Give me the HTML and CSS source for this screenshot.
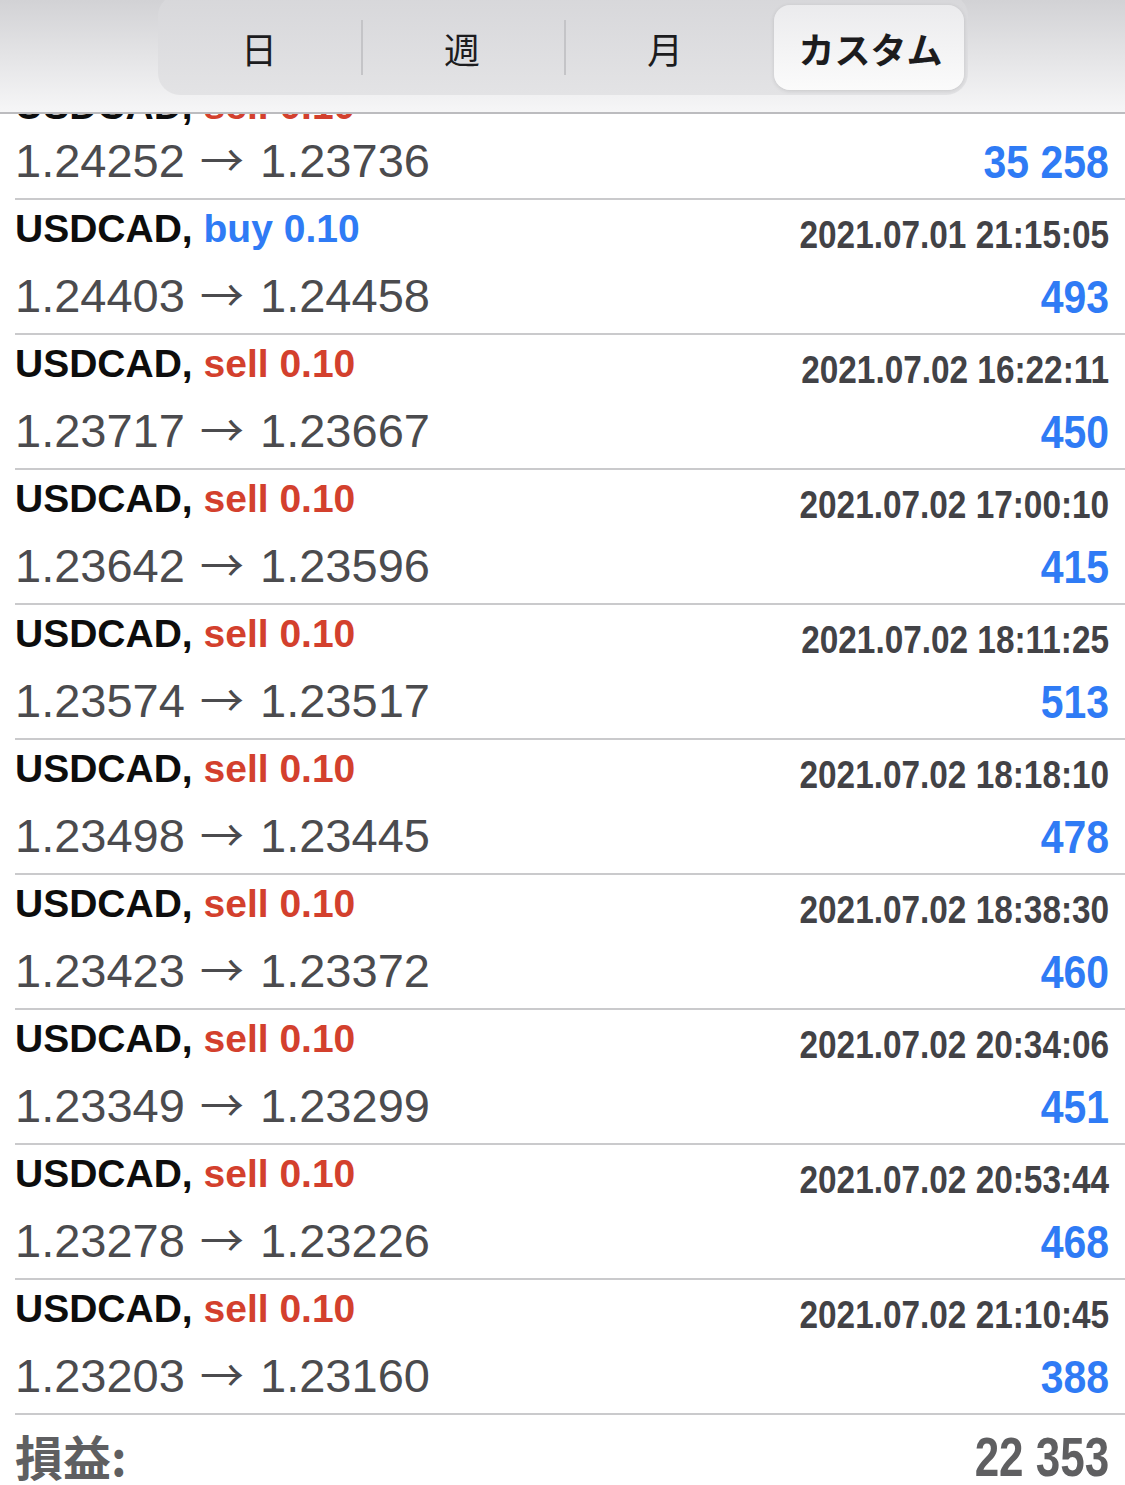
FILE: index.html
```html
<!DOCTYPE html>
<html>
<head>
<link rel="stylesheet" href="styles.css">
</head>
<body>
 <div class="top-bar">
   <div class="segments">
     <div class="seg">日</div>
     <div class="seg">週</div>
     <div class="seg">月</div>
     <div class="seg seg-on">カスタム</div>
   </div>
 </div>

 <div class="deals">
   <div class="deal deal-cut">
     <div class="deal-title">USDCAD, <span class="sell">sell 0.10</span></div>
     <div class="deal-time"></div>
     <div class="deal-price">1.24252 <span class="arrow">→</span> 1.23736</div>
     <div class="deal-profit">35 258</div>
   </div>
   <div class="deal">
     <div class="deal-title">USDCAD, <span class="buy">buy 0.10</span></div>
     <div class="deal-time">2021.07.01 21:15:05</div>
     <div class="deal-price">1.24403 <span class="arrow">→</span> 1.24458</div>
     <div class="deal-profit">493</div>
   </div>
   <div class="deal">
     <div class="deal-title">USDCAD, <span class="sell">sell 0.10</span></div>
     <div class="deal-time">2021.07.02 16:22:11</div>
     <div class="deal-price">1.23717 <span class="arrow">→</span> 1.23667</div>
     <div class="deal-profit">450</div>
   </div>
   <div class="deal">
     <div class="deal-title">USDCAD, <span class="sell">sell 0.10</span></div>
     <div class="deal-time">2021.07.02 17:00:10</div>
     <div class="deal-price">1.23642 <span class="arrow">→</span> 1.23596</div>
     <div class="deal-profit">415</div>
   </div>
   <div class="deal">
     <div class="deal-title">USDCAD, <span class="sell">sell 0.10</span></div>
     <div class="deal-time">2021.07.02 18:11:25</div>
     <div class="deal-price">1.23574 <span class="arrow">→</span> 1.23517</div>
     <div class="deal-profit">513</div>
   </div>
   <div class="deal">
     <div class="deal-title">USDCAD, <span class="sell">sell 0.10</span></div>
     <div class="deal-time">2021.07.02 18:18:10</div>
     <div class="deal-price">1.23498 <span class="arrow">→</span> 1.23445</div>
     <div class="deal-profit">478</div>
   </div>
   <div class="deal">
     <div class="deal-title">USDCAD, <span class="sell">sell 0.10</span></div>
     <div class="deal-time">2021.07.02 18:38:30</div>
     <div class="deal-price">1.23423 <span class="arrow">→</span> 1.23372</div>
     <div class="deal-profit">460</div>
   </div>
   <div class="deal">
     <div class="deal-title">USDCAD, <span class="sell">sell 0.10</span></div>
     <div class="deal-time">2021.07.02 20:34:06</div>
     <div class="deal-price">1.23349 <span class="arrow">→</span> 1.23299</div>
     <div class="deal-profit">451</div>
   </div>
   <div class="deal">
     <div class="deal-title">USDCAD, <span class="sell">sell 0.10</span></div>
     <div class="deal-time">2021.07.02 20:53:44</div>
     <div class="deal-price">1.23278 <span class="arrow">→</span> 1.23226</div>
     <div class="deal-profit">468</div>
   </div>
   <div class="deal">
     <div class="deal-title">USDCAD, <span class="sell">sell 0.10</span></div>
     <div class="deal-time">2021.07.02 21:10:45</div>
     <div class="deal-price">1.23203 <span class="arrow">→</span> 1.23160</div>
     <div class="deal-profit">388</div>
   </div>

   <div class="total">
     <div class="total-label">損益:</div>
     <div class="total-value">22 353</div>
   </div>
 </div>
</body>
</html>
```

FILE: styles.css
```css
/* Base */
body {
 margin: 0;
 background: #fff;
 font-family: "Liberation Sans", Arial, sans-serif;
 overflow: hidden;
}

/* Period switcher, sits over the scrolled list */
.top-bar {
 position: absolute;
 top: 0;
 left: 0;
 right: 0;
 height: 112px;
 background: linear-gradient(#d2d2d5, #f6f6f7);
 border-bottom: 2px solid #bcbcbf;
 z-index: 10;
}

.segments {
 display: flex;
 width: 806px;
 height: 85px;
 margin: -6px auto 0;
 padding: 11px 4px 5px 0;
 background: linear-gradient(#d7d7da, #e3e3e5);
 border-radius: 22px;
 font-family: "Noto Sans CJK JP", sans-serif;
 font-size: 36px;
 color: #1c1c1e;
}

.seg {
 flex: 0 0 203px;
 display: flex;
 align-items: center;
 justify-content: center;
 position: relative;
}

.seg + .seg::before {
 content: "";
 position: absolute;
 left: 0;
 top: 15px;
 bottom: 15px;
 border-left: 2px solid #c4c4c7;
}

.seg-on {
 flex: 1;
 margin-left: 7px;
 padding-left: 4px;
 background: linear-gradient(#ebebed, #fbfbfb);
 border-radius: 16px;
 box-shadow: 0 1px 4px rgba(0,0,0,0.12);
 font-weight: 700;
}

.seg-on::before {
 display: none;
}

/* Deal list */
.deals {
 padding-top: 65px;
}

.deal {
 display: grid;
 grid-template-columns: 1fr auto;
 grid-template-rows: 58px 75px;
 margin-left: 15px;
 padding-right: 16px;
 border-bottom: 2px solid #cacacc;
}

.deal-title {
 font-size: 39px;
 line-height: 58px;
 font-weight: 700;
 color: #0d0d0d;
 white-space: nowrap;
}

/* the row half hidden under the switcher sits a bit lower */
.deal-cut .deal-title {
 padding-top: 12px;
}

.sell { color: #d3402d; }
.buy { color: #2f7bf5; }

.deal-time {
 font-size: 39px;
 line-height: 58px;
 font-weight: 700;
 color: #424246;
 text-align: right;
 padding-top: 6px;
 transform: scaleX(0.855);
 transform-origin: right center;
 white-space: nowrap;
}

.deal-price {
 font-size: 47px;
 line-height: 75px;
 color: #4b4b4e;
 white-space: nowrap;
}

.arrow {
 font-family: "Noto Sans CJK JP", sans-serif;
 font-size: 44px;
 line-height: 1;
 margin: 0 3px 0 2px;
}

.deal-profit {
 font-size: 46px;
 line-height: 75px;
 padding-top: 2px;
 font-weight: 700;
 color: #2f7bf5;
 text-align: right;
 transform: scaleX(0.89);
 transform-origin: right center;
 white-space: nowrap;
}

/* Total */
.total {
 display: flex;
 justify-content: space-between;
 align-items: baseline;
 margin-left: 15px;
 padding: 4px 16px 0 0;
 color: #5f5f61;
 font-weight: 700;
}

.total-label {
 font-family: "Noto Sans CJK JP", sans-serif;
 font-size: 48px;
 line-height: 72px;
}

.total-value {
 font-size: 55px;
 line-height: 72px;
 transform: scaleX(0.8);
 transform-origin: right center;
}
```
